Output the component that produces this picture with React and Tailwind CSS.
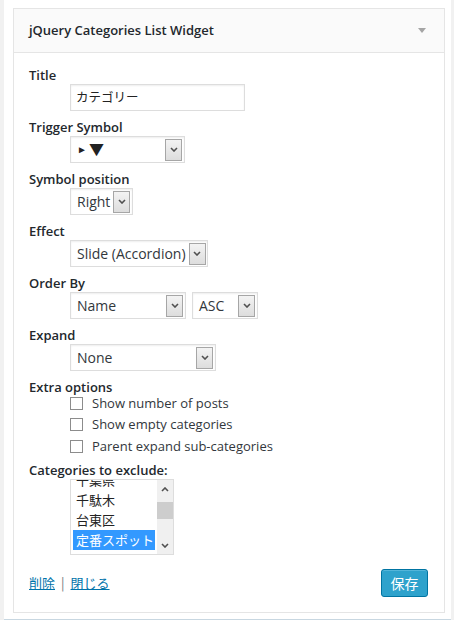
import React from "react";

const sans = { fontFamily: '"Open Sans", "Noto Sans CJK JP", sans-serif' };
const jp = { fontFamily: '"Noto Sans CJK JP", "Open Sans", sans-serif' };

function Chevron({ up }) {
  return (
    <svg width="8" height="5" viewBox="0 0 8 5">
      <path
        d={up ? "M1 4 L4 1 L7 4" : "M1 1 L4 4 L7 1"}
        fill="none"
        stroke="#505050"
        strokeWidth="1.6"
      />
    </svg>
  );
}

function Select({ className, children }) {
  return (
    <div className={`flex h-[27px] items-center border border-[#ddd] bg-white pl-[6px] pr-[2px] shadow-[inset_0_1px_2px_rgba(0,0,0,0.07)] ${className}`}>
      <span className="flex flex-1 items-center whitespace-nowrap text-[14px] text-[#32373c]">{children}</span>
      <span className="ml-[3px] flex h-[22px] w-[17px] shrink-0 items-center justify-center border border-[#a6a6a6] bg-gradient-to-b from-[#f3f3f3] to-[#dddddd]">
        <Chevron />
      </span>
    </div>
  );
}

function Field({ label, children }) {
  return (
    <div className="mb-[7px]">
      <div className="h-[18px] text-[13px] font-semibold leading-[18px] text-[#23282d]">{label}</div>
      <div className="flex gap-[6px] pl-[41px]">{children}</div>
    </div>
  );
}

function Check({ label, h }) {
  return (
    <div className={`flex items-center pl-[41px] ${h}`}>
      <span className="h-[13px] w-[13px] border border-[#8c8c8c] bg-white" />
      <span className="ml-[9px] text-[13px] text-[#32373c]">{label}</span>
    </div>
  );
}

export default function App() {
  const cats = ["千葉県", "千駄木", "台東区", "定番スポット"];
  return (
    <div className="min-h-[620px] bg-[#f1f1f1] pl-1 pr-[3px]" style={sans}>
      <div className="border-b-2 border-[#c8d7e1] bg-white pb-[6px] pl-[9px] pr-[6px] pt-2">
        <div className="border border-[#e5e5e5] bg-white">
          {/* header */}
          <div className="flex h-[44px] items-center justify-between border-b border-[#e5e5e5] bg-[#fafafa] pl-[15px] pr-[18px]">
            <span className="text-[13px] font-semibold text-[#23282d]">jQuery Categories List Widget</span>
            <svg width="8" height="5" viewBox="0 0 8 5">
              <path d="M0 0 L8 0 L4 5 Z" fill="#a5a5a5" />
            </svg>
          </div>

          {/* body */}
          <div className="px-[15px] pb-[15px] pt-[13px]">
            <Field label="Title">
              <div className="flex h-[27px] w-[175px] items-center border border-[#ddd] bg-white pl-[5px] shadow-[inset_0_1px_2px_rgba(0,0,0,0.07)]">
                <span className="text-[12.5px] text-[#222]" style={jp}>カテゴリー</span>
              </div>
            </Field>

            <Field label="Trigger Symbol">
              <Select className="w-[115px]">
                <span className="text-[10px] text-[#222]">►</span>
                <span className="ml-[2px] text-[15px] text-[#222]">▼</span>
              </Select>
            </Field>

            <Field label="Symbol position">
              <Select className="w-[63px]">Right</Select>
            </Field>

            <Field label="Effect">
              <Select className="w-[138px]">Slide (Accordion)</Select>
            </Field>

            <Field label="Order By">
              <Select className="w-[116px]">Name</Select>
              <Select className="w-[66px]">ASC</Select>
            </Field>

            <Field label="Expand">
              <Select className="w-[146px]">None</Select>
            </Field>

            <div className="h-[15px] text-[13px] font-semibold leading-[18px] text-[#23282d]">Extra options</div>
            <div className="mb-[3px]">
              <Check label="Show number of posts" h="h-[21px]" />
              <Check label="Show empty categories" h="h-[21px]" />
              <Check label="Parent expand sub-categories" h="h-[23px]" />
            </div>

            <div className="h-[18px] text-[13px] font-semibold leading-[18px] text-[#23282d]">Categories to exclude:</div>
            <div className="pl-[41px]">
              <div className="flex h-[76px] w-[104px] border border-[#ddd] bg-white">
                <div className="flex-1 overflow-hidden p-[2px]">
                  <div className="-mt-[12px]" style={jp}>
                    {cats.map((c, i) => (
                      <div
                        key={c}
                        className={`h-[20px] whitespace-nowrap pl-[3px] text-[13px] leading-[20px] ${i === 3 ? "bg-[#3399ff] text-white" : "text-[#222]"}`}
                      >
                        {c}
                      </div>
                    ))}
                  </div>
                </div>
                <div className="flex w-[16px] flex-col items-center bg-[#f0f0f0]">
                  <div className="flex h-[18px] items-center justify-center">
                    <Chevron up />
                  </div>
                  <div className="mt-[4px] h-[17px] w-full bg-[#cdcdcd]" />
                  <div className="flex-1" />
                  <div className="flex h-[18px] items-center justify-center">
                    <Chevron />
                  </div>
                </div>
              </div>
            </div>

            {/* footer */}
            <div className="mt-[14px] flex h-[28px] items-center justify-between">
              <div className="flex items-center text-[13px]" style={jp}>
                <a className="text-[#0073aa] underline">削除</a>
                <span className="mx-[6px] text-[#72777c]">|</span>
                <a className="text-[#0073aa] underline">閉じる</a>
              </div>
              <button
                className="mr-[1px] h-[28px] w-[47px] rounded-[3px] border border-[#0074a2] bg-[#2ea2cc] text-[14px] text-white shadow-[inset_0_1px_0_rgba(120,200,230,0.5)]"
                style={jp}
              >
                保存
              </button>
            </div>
          </div>
        </div>
      </div>
    </div>
  );
}
